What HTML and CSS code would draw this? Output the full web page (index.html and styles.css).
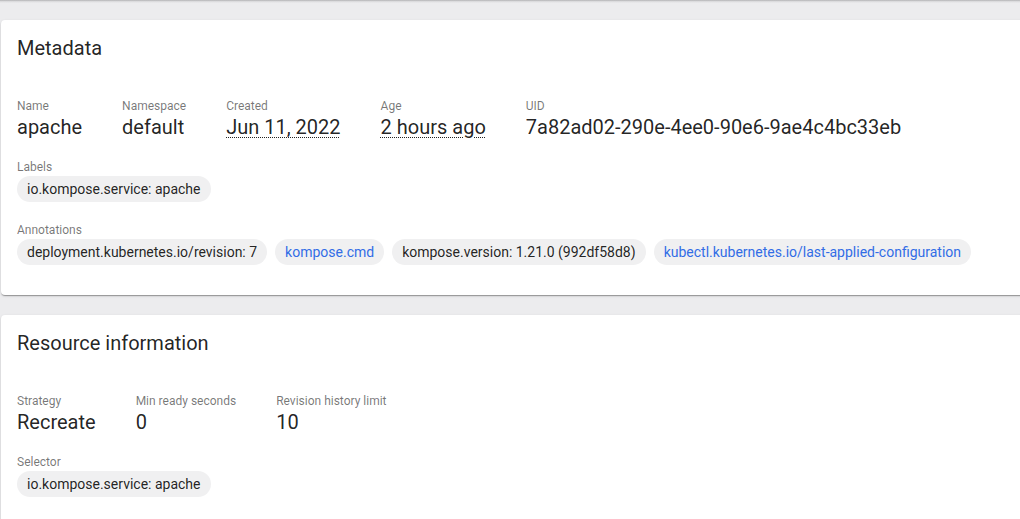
FILE: index.html
```html
<!DOCTYPE html>
<html lang="en">
<head>
<meta charset="utf-8">
<title>Deployment apache</title>
<link rel="stylesheet" href="styles.css">
</head>
<body>
<div class="toolbar-edge"></div>
<main class="content">
  <section class="card">
    <h2 class="card-title">Metadata</h2>
    <div class="props">
      <div class="prop"><div class="prop-label">Name</div><div class="prop-value">apache</div></div>
      <div class="prop"><div class="prop-label">Namespace</div><div class="prop-value">default</div></div>
      <div class="prop"><div class="prop-label">Created</div><div class="prop-value dotted">Jun 11, 2022</div></div>
      <div class="prop"><div class="prop-label">Age</div><div class="prop-value dotted">2 hours ago</div></div>
      <div class="prop"><div class="prop-label">UID</div><div class="prop-value">7a82ad02-290e-4ee0-90e6-9ae4c4bc33eb</div></div>
    </div>
    <div class="block">
      <div class="prop-label">Labels</div>
      <div class="chips">
        <span class="chip">io.kompose.service: apache</span>
      </div>
    </div>
    <div class="block">
      <div class="prop-label">Annotations</div>
      <div class="chips">
        <span class="chip">deployment.kubernetes.io/revision: 7</span>
        <span class="chip link">kompose.cmd</span>
        <span class="chip">kompose.version: 1.21.0 (992df58d8)</span>
        <span class="chip link">kubectl.kubernetes.io/last-applied-configuration</span>
      </div>
    </div>
  </section>

  <section class="card">
    <h2 class="card-title">Resource information</h2>
    <div class="props">
      <div class="prop"><div class="prop-label">Strategy</div><div class="prop-value">Recreate</div></div>
      <div class="prop"><div class="prop-label">Min ready seconds</div><div class="prop-value">0</div></div>
      <div class="prop"><div class="prop-label">Revision history limit</div><div class="prop-value">10</div></div>
    </div>
    <div class="block">
      <div class="prop-label">Selector</div>
      <div class="chips">
        <span class="chip">io.kompose.service: apache</span>
      </div>
    </div>
  </section>
</main>
</body>
</html>
```
FILE: styles.css
```css
* { box-sizing: border-box; }
html, body {
  margin: 0;
  padding: 0;
  height: 100%;
  overflow: hidden;
}
body {
  background: #ececee;
  font-family: Roboto, "Liberation Sans", Arial, sans-serif;
  color: rgba(0, 0, 0, 0.87);
}
.toolbar-edge {
  height: 3px;
  background: linear-gradient(#a9a9ab, #d6d6d8 1px, #ececee 3px);
}
.content {
  padding: 17px 0 0 1px;
  width: 1060px;
}
.card {
  background: #fff;
  border-radius: 4px;
  box-shadow: 0 2px 1px -1px rgba(0,0,0,.2), 0 1px 1px 0 rgba(0,0,0,.14), 0 1px 3px 0 rgba(0,0,0,.12);
  padding: 16px 16px 30px;
  margin-bottom: 20px;
}
.card-title {
  margin: 0;
  font-size: 20px;
  line-height: 24px;
  font-weight: 400;
  color: rgba(0, 0, 0, 0.87);
}
.props {
  display: flex;
  gap: 40px;
  margin-top: 38px;
}
.prop-label {
  font-size: 12px;
  line-height: 16px;
  color: rgba(0, 0, 0, 0.54);
}
.prop-value {
  font-size: 20px;
  line-height: 24px;
  margin-top: 1px;
  white-space: nowrap;
}
.dotted {
  text-decoration: underline dotted;
  text-decoration-thickness: 1px;
  text-underline-offset: 3px;
}
.block {
  margin-top: 20px;
}
.chips {
  display: flex;
  flex-wrap: wrap;
  gap: 8px;
  padding-top: 1px;
}
.chip {
  display: inline-flex;
  align-items: center;
  height: 26px;
  padding: 0 10px;
  border-radius: 13px;
  background: #f0f0f1;
  font-size: 14px;
  color: rgba(0, 0, 0, 0.87);
  white-space: nowrap;
}
.chip.link {
  color: #326de6;
}
```
